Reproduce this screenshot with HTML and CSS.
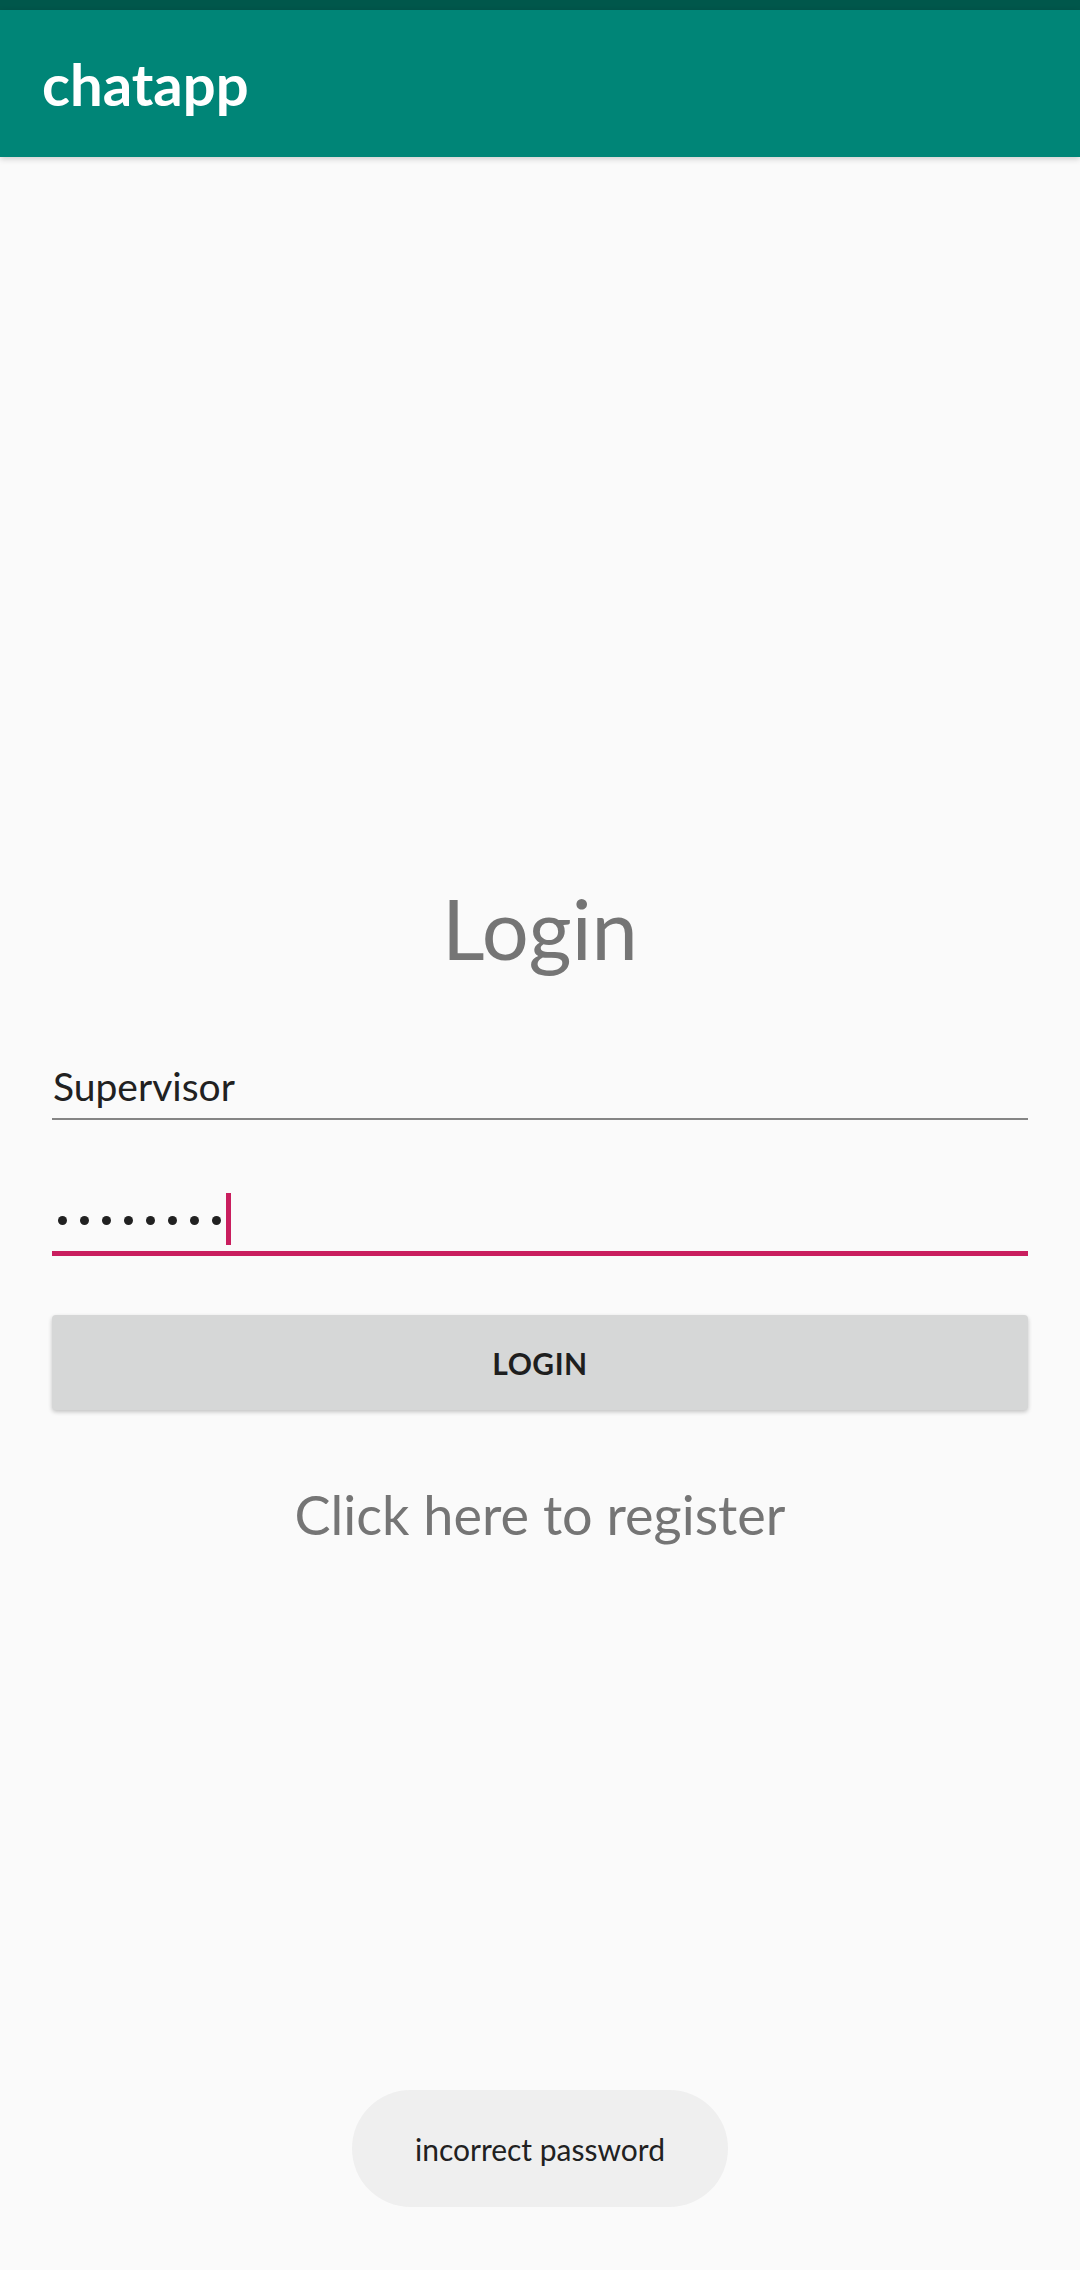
FILE: index.html
```html
<!DOCTYPE html>
<html>
<head>
<meta charset="utf-8">
<link rel="stylesheet" href="styles.css">
</head>
<body>
<div class="statusbar"></div>
<header class="appbar"><span class="appbar-title">chatapp</span></header>
<main class="content">
  <h1 class="title">Login</h1>
  <div class="field field-user"><span class="field-text">Supervisor</span></div>
  <div class="field field-pass">
    <span class="dots"><i></i><i></i><i></i><i></i><i></i><i></i><i></i><i></i></span>
    <span class="cursor"></span>
  </div>
  <button class="btn">LOGIN</button>
  <p class="register">Click here to register</p>
</main>
<div class="toast">incorrect password</div>
</body>
</html>
```

FILE: styles.css
```css
html, body {
  margin: 0;
  padding: 0;
}
body {
  width: 1080px;
  height: 2270px;
  background: #fafafa;
  font-family: Lato, "Open Sans", sans-serif;
  position: relative;
  overflow: hidden;
}
.statusbar {
  height: 10px;
  background: #00574b;
}
.appbar {
  height: 147px;
  background: #008577;
  box-shadow: 0 2px 6px rgba(0,0,0,0.18);
  display: flex;
  align-items: center;
  padding-left: 42px;
  position: relative;
  z-index: 1;
}
.appbar-title {
  color: #ffffff;
  font-weight: 700;
  font-size: 58px;
  line-height: 1;
  margin-top: 0;
}
.content {
  display: flex;
  flex-direction: column;
  padding: 0 52px;
}
.title {
  margin: 724px 0 0 0;
  font-weight: 400;
  font-size: 83px;
  line-height: 95px;
  color: #757575;
  text-align: center;
}
.field {
  display: flex;
  align-items: flex-end;
}
.field-user {
  margin-top: 87px;
  padding-bottom: 8px;
  border-bottom: 2px solid #858585;
}
.field-text {
  font-size: 39px;
  line-height: 47px;
  color: #212121;
  padding-left: 1px;
}
.field-pass {
  height: 136px;
  box-sizing: border-box;
  padding-bottom: 6px;
  border-bottom: 5px solid #c91e5e;
  align-items: flex-end;
}
.dots {
  display: flex;
  gap: 13px;
  padding-left: 6px;
  margin-bottom: 20px;
}
.dots i {
  display: block;
  width: 9px;
  height: 9px;
  border-radius: 50%;
  background: #212121;
}
.cursor {
  display: block;
  width: 5px;
  height: 52px;
  background: #c91e5e;
  margin-left: 5px;
}
.btn {
  margin-top: 59px;
  height: 95px;
  border: none;
  border-radius: 4px;
  background: #d6d7d7;
  box-shadow: 0 2px 4px rgba(0,0,0,0.22);
  font-family: Lato, "Open Sans", sans-serif;
  font-weight: 700;
  font-size: 30px;
  color: #1e1e1e;
  letter-spacing: 0.5px;
  padding: 0;
}
.register {
  margin: 73px 0 0 0;
  font-size: 54px;
  line-height: 63px;
  color: #757575;
  text-align: center;
}
.toast {
  position: absolute;
  left: 352px;
  top: 2090px;
  width: 376px;
  height: 117px;
  border-radius: 59px;
  background: #efefef;
  color: #212121;
  font-size: 30px;
  display: flex;
  align-items: center;
  justify-content: center;
}
```
